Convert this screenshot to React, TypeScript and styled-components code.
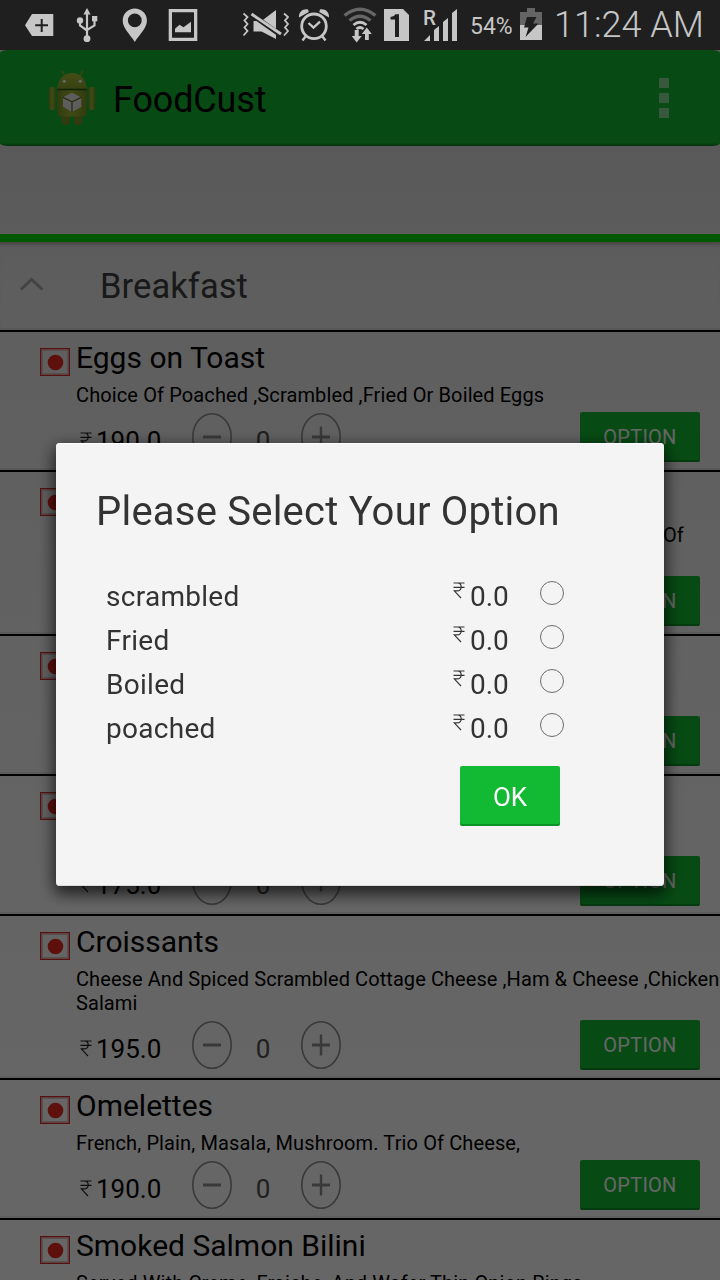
import React from 'react';
import styled, { createGlobalStyle } from 'styled-components';

const GlobalStyle = createGlobalStyle`
  * { box-sizing: border-box; }
  html, body { margin: 0; padding: 0; }
  body {
    width: 720px;
    height: 1280px;
    overflow: hidden;
    font-family: Roboto, 'Liberation Sans', sans-serif;
    background: #dedede;
  }
`;

const Screen = styled.div`
  display: flex;
  flex-direction: column;
  width: 720px;
  height: 1280px;
  overflow: hidden;
  background: linear-gradient(#dcdcdc 50px, #dfdfdf 150px, #ededed 330px, #f0f0f0 480px, #fafafa 850px, #ffffff 1150px);
`;

const StatusBar = styled.header`
  display: flex;
  flex: none;
  height: 50px;
  background: #1f1f1f;
  color: #c6c6c6;
`;

const StatusGlyph = styled.svg<{ $gap: number }>`
  flex: none;
  display: block;
  height: 50px;
  margin-left: ${(p) => p.$gap}px;
  fill: #c6c6c6;
`;

const BatteryLevel = styled.span`
  flex: none;
  width: 51px;
  margin-left: 11px;
  padding-top: 2px;
  font-size: 23px;
  line-height: 50px;
  white-space: nowrap;
`;

const Clock = styled.span`
  flex: none;
  margin-left: 12px;
  font-size: 36px;
  font-weight: 300;
  line-height: 51px;
  white-space: nowrap;
`;

const ActionBar = styled.div`
  display: flex;
  align-items: center;
  flex: none;
  height: 96px;
  padding: 0 51px 0 48px;
  border-radius: 8px / 3px;
  background: linear-gradient(#12b832 93px, #0c8a24 95px, #0a7a20 96px);
`;

const AppName = styled.h1`
  flex: 1;
  margin: 3px 0 0 17px;
  font-size: 36px;
  font-weight: 400;
  line-height: 42px;
  letter-spacing: -0.15px;
  color: #000;
`;

const OverflowMenu = styled.div`
  display: flex;
  flex-direction: column;
  gap: 5px;
`;

const OverflowDot = styled.i`
  width: 10px;
  height: 10px;
  background: #8cdc9b;
`;

const TabStrip = styled.div`
  flex: none;
  height: 96px;
  border-bottom: 8px solid #00de00;
`;

const SectionHeader = styled.div`
  display: flex;
  align-items: center;
  flex: none;
  height: 90px;
  padding-left: 20px;
  border-bottom: 2px solid #000;
  box-shadow: inset 0 5px 4px -3px rgba(0, 0, 0, 0.28), inset 0 -2px 0 rgba(0, 0, 0, 0.07);
`;

const Chevron = styled.svg`
  display: block;
  margin-top: -4px;
  fill: none;
  stroke: #a8a8a8;
  stroke-width: 3;
`;

const SectionTitle = styled.h2`
  margin: 0 0 1px 56px;
  font-size: 34.5px;
  font-weight: 400;
  line-height: 42px;
  letter-spacing: 0.08px;
  color: #404040;
`;

const MenuRow = styled.article`
  display: flex;
  flex: none;
  align-items: flex-start;
  padding: 8px 0 8px 40px;
  border-bottom: 2px solid #000;
  box-shadow: inset 0 -2px 0 rgba(0, 0, 0, 0.07);
`;

const FoodMark = styled.svg`
  flex: none;
  display: block;
  margin: 8px 6px 0 0;
`;

const ItemBody = styled.div`
  flex: 1;
  min-width: 0;
`;

const ItemName = styled.h3`
  height: 36px;
  margin: 0 0 7px;
  font-size: 30px;
  font-weight: 400;
  line-height: 36px;
  color: #000;
  white-space: nowrap;
`;

const Description = styled.p<{ $lines: number; $indent: number }>`
  height: ${(p) => p.$lines * 24}px;
  margin: 0 0 5px;
  padding-left: ${(p) => p.$indent}px;
  font-size: 20px;
  line-height: 24px;
  letter-spacing: ${(p) => (p.$lines > 1 ? 0.08 : 0.12)}px;
  color: #000;
  white-space: pre;
`;

const Controls = styled.div`
  display: flex;
  align-items: center;
  height: 50px;
  padding: 0 20px 0 4px;
`;

const Price = styled.span`
  flex: none;
  width: 100px;
  padding: 8px 0 0 4px;
  font-size: 26px;
  line-height: 42px;
  color: #000;
`;

const Quantity = styled.span`
  flex: none;
  width: 69px;
  padding-top: 8px;
  font-size: 26px;
  line-height: 42px;
  text-align: center;
  padding-right: 7px;
  color: #505050;
`;

const Stepper = styled.svg`
  flex: none;
  display: block;
  fill: none;
  stroke: #8e8e8e;
`;

const Button = styled.button<{ $large?: boolean }>`
  display: block;
  width: ${(p) => (p.$large ? 100 : 120)}px;
  height: ${(p) => (p.$large ? 60 : 50)}px;
  margin: 0 0 0 auto;
  padding: ${(p) => (p.$large ? 2 : 0)}px 0 0;
  border: 0;
  border-radius: 2px;
  background: #12b932;
  box-shadow: inset 0 -2px 0 rgba(0, 60, 10, 0.3);
  font-family: inherit;
  font-size: ${(p) => (p.$large ? 26 : 20)}px;
  letter-spacing: ${(p) => (p.$large ? 0 : 0.25)}px;
  color: #fff;
`;

const Scrim = styled.div`
  position: fixed;
  left: 0;
  top: 50px;
  width: 720px;
  height: 1230px;
  display: flex;
  justify-content: center;
  align-items: flex-start;
  padding-top: 393px;
  background: rgba(0, 0, 0, 0.6);
`;

const Dialog = styled.section`
  display: flex;
  flex-direction: column;
  width: 608px;
  height: 443px;
  padding: 45px 104px 60px 40px;
  border-radius: 4px;
  background: #f4f4f4;
  box-shadow: 0 6px 16px 2px rgba(0, 0, 0, 0.7), inset 0 1px 0 #fff, inset 0 -1px 0 #dcdcdc;
`;

const DialogTitle = styled.h2`
  margin: 0 0 39px;
  font-size: 40px;
  font-weight: 400;
  line-height: 48px;
  letter-spacing: 0.22px;
  color: #333;
  white-space: nowrap;
`;

const OptionRow = styled.label`
  display: flex;
  align-items: center;
  height: 44px;
  padding-left: 10px;
  font-size: 28px;
  line-height: 44px;
  color: #333;
`;

const OptionName = styled.span`
  flex: none;
  width: 347px;
  letter-spacing: 0.28px;
`;

const OptionPrice = styled.span`
  flex: none;
  width: 77px;
  padding-left: 5px;
  white-space: nowrap;
`;

const Radio = styled.i`
  flex: none;
  width: 24px;
  height: 24px;
  margin: -8px 0 0 -2px;
  border: 1.5px solid #6c6c6c;
  border-radius: 50%;
`;

const OkSlot = styled.div`
  margin-top: 15px;
`;

const RupeeSvg = styled.svg<{ $raised?: boolean }>`
  flex: none;
  display: block;
  margin-top: ${(p) => (p.$raised ? -14 : 6)}px;
  fill: none;
  stroke: ${(p) => (p.$raised ? '#333' : '#222')};
  stroke-width: 1.15;
`;

const Rupee = ({ raised }: { raised?: boolean }) => (
  <RupeeSvg $raised={raised} width="12" height="17" viewBox="0 0 12 17">
    <path d="M0.5 1h11M0.5 5.3h11M1 1h3.5c5 0 5 7.8-.5 7.8H1.2L8 16" />
  </RupeeSvg>
);

const Android = () => (
  <svg width="48" height="56" viewBox="48 70 48 56">
    <defs>
      <linearGradient id="droidBody" x1="0" x2="1" y1="0" y2="0">
        <stop offset="0" stopColor="#7d9426" />
        <stop offset=".45" stopColor="#a3b834" />
        <stop offset="1" stopColor="#7c9325" />
      </linearGradient>
      <linearGradient id="droidHead" x1="0" x2="0" y1="0" y2="1">
        <stop offset="0" stopColor="#aabf3b" />
        <stop offset="1" stopColor="#8ea42d" />
      </linearGradient>
    </defs>
    <path d="M62 70.800l4.500 7M83 70.800l-4.500 7" stroke="#9ab030" strokeWidth="1.500" />
    <rect x="49" y="87" width="6.5" height="23" rx="2.500" fill="url(#droidBody)" />
    <rect x="88.5" y="87" width="6.500" height="23" rx="2.500" fill="url(#droidBody)" />
    <path d="M61.5 113h8v9q0 3-4 3t-4-3zM74 113h8v9q0 3-4 3t-4-3z" fill="#7c9326" />
    <path d="M57.3 88.800c1-21 28.500-21 29.500 0z" fill="url(#droidHead)" />
    <path d="M57.3 90.200h29.500V112q0 4.500-5 4.500H62.300q-5 0-5-4.500z" fill="url(#droidBody)" />
    <path d="M57.300 89.500h29.500" stroke="#3e4a12" strokeWidth="1.400" />
    <circle cx="64.300" cy="81.300" r="1.600" fill="#fff" />
    <circle cx="80.300" cy="81.300" r="1.600" fill="#fff" />
    <path d="M72 92.800l9.300 4.700v9.600L72 112l-9-5.200v-9.600z" fill="#e8e8e8" />
    <path d="M63 97.300l9 4.500 9.300-4.500M72 101.800V112" fill="none" stroke="#66751f" strokeWidth="1.300" />
  </svg>
);

const StatusIcons = () => (
  <>
    <StatusGlyph $gap={25} width="29" viewBox="25 0 29 50">
      <path fillRule="evenodd" d="M25 25.300L32 14h21.300v22H32zM40.700 19v5.300h-5.500v2h5.500V32h2v-5.700H48v-2h-5.300V19z" />
    </StatusGlyph>
    <StatusGlyph $gap={22} width="22" viewBox="76 0 22 50">
      <path d="M87 8l3.600 6.500h-7.200z" />
      <circle cx="80" cy="20.500" r="3.200" />
      <rect x="92" y="16" width="5.300" height="5.300" />
      <circle cx="87" cy="38.700" r="3.400" />
      <path d="M87 13v25M80 21v4.500l7 5M94.500 20v5.500L87 30" fill="none" stroke="#c6c6c6" strokeWidth="2.200" />
    </StatusGlyph>
    <StatusGlyph $gap={24} width="26" viewBox="122 0 26 50">
      <path fillRule="evenodd" d="M134.800 42C130 34 122.700 28.500 122.700 20.500a12.100 12 0 0 1 24.200 0C146.900 28.500 139.600 34 134.800 42zM134.800 13.500a6.900 6.900 0 1 0 0 13.800a6.900 6.900 0 1 0 0-13.800z" />
    </StatusGlyph>
    <StatusGlyph $gap={20} width="30" viewBox="168 0 30 50">
      <path fillRule="evenodd" d="M168.700 9h28.600v32h-28.600zM172 12.300v25.400h22V12.300z" />
      <path d="M175 32.300v-3.600l4.500-4 4 2.600 7.500-5.500v10.500z" />
    </StatusGlyph>
    <StatusGlyph $gap={45} width="47" viewBox="243 0 47 50">
      <path d="M253.500 21h8l14.500-11v29l-14.500-7.500h-8z" />
      <path d="M253 15.500l29 20.500" stroke="#1f1f1f" strokeWidth="5" />
      <path d="M251.500 14l29.500 20" stroke="#c6c6c6" strokeWidth="3" />
      <path d="M243.500 13.500l4 3.500-3 3.500 3 3.500-3 3.500 3 3.500-4 4.500M284 13.500l4 3.500-3 3.500 3 3.500-3 3.500 3 3.500-4 4.500" fill="none" stroke="#c6c6c6" strokeWidth="1.800" />
    </StatusGlyph>
    <StatusGlyph $gap={8} width="32" viewBox="298 0 32 50">
      <circle cx="314" cy="26.300" r="12.300" fill="none" stroke="#c6c6c6" strokeWidth="2.800" />
      <path d="M308.500 23l5 4.700 6.500-6M305.500 36.500l-3 4M322.500 36.500l3 4" fill="none" stroke="#c6c6c6" strokeWidth="2.400" />
      <path d="M299 17.500c-.5-5.500 4-9 9-8l.8 2.500zM329 17.500c.5-5.500-4-9-9-8l-.8 2.500z" />
    </StatusGlyph>
    <StatusGlyph $gap={13} width="35" viewBox="343 0 35 50">
      <path d="M344.500 15.500q15.500-12.500 31 0M349.500 20.500q10.500-8.500 21 0" fill="none" stroke="#666" strokeWidth="3.300" />
      <path d="M353.500 25q6.500-5.500 13 0M356.500 29q3.500-3 7 0" fill="none" stroke="#c6c6c6" strokeWidth="2.800" />
      <path d="M354.700 30h4v6h3l-5 6.500-5-6.500h3zM365 40v-6h-3.200l5-6.500 5 6.500h-3V40z" />
    </StatusGlyph>
    <StatusGlyph $gap={6} width="26" viewBox="384 0 26 50">
      <path d="M384 9h19l6 6v26h-25z" />
      <path d="M390.500 19.500v-2.500c3-.3 4-1.200 4.800-2.700h3.700V37H395V19.500z" fill="#1f1f1f" />
    </StatusGlyph>
    <StatusGlyph $gap={13} width="36" viewBox="423 0 36 50">
      <text x="423" y="25" fontFamily="Roboto, sans-serif" fontSize="21" fontWeight="500" textLength="13" lengthAdjust="spacingAndGlyphs">R</text>
      <path d="M424 41l6-6v6zM434 41V30l5-4v15zM443 41V22l5-4v23zM452 41V13l5-4v32z" />
    </StatusGlyph>
    <BatteryLevel>54%</BatteryLevel>
    <StatusGlyph $gap={-1} width="22" viewBox="520 0 22 50">
      <path d="M527 8h8v4h7v13h-22V12h7z" fill="#646464" />
      <path d="M520 25h22v15h-22z" />
      <path d="M527 17h9.500l-3.500 6.500h5.500L525.500 37l3-9.500h-4.500z" fill="#1f1f1f" />
    </StatusGlyph>
  </>
);

type Item = { name: string; lines: string[]; price: string; indent?: number };

const items: Item[] = [
  { name: 'Eggs on Toast', lines: ['Choice Of Poached ,Scrambled ,Fried Or Boiled Eggs'], price: '190.0' },
  { name: '', lines: ['Of', ''], price: '', indent: 587 },
  { name: '', lines: [''], price: '' },
  { name: '', lines: [''], price: '175.0' },
  { name: 'Croissants', lines: ['Cheese And Spiced Scrambled Cottage Cheese ,Ham & Cheese ,Chicken', 'Salami'], price: '195.0' },
  { name: 'Omelettes', lines: ['French, Plain, Masala, Mushroom. Trio Of Cheese,'], price: '190.0' },
  { name: 'Smoked Salmon Bilini', lines: ['Served With Creme, Fraiche, And Wafer Thin Onion Rings'], price: '' },
];

const options = ['scrambled', 'Fried', 'Boiled', 'poached'];

const MenuItem = ({ item }: { item: Item }) => (
  <MenuRow>
    <FoodMark width="30" height="28" viewBox="0 0 30 28">
      <rect x="2" y="2" width="26" height="24" fill="none" stroke="#dcb4b2" strokeWidth="1.500" />
      <rect x=".6" y=".6" width="28.800" height="26.800" fill="none" stroke="#d82c28" strokeWidth="1.200" />
      <circle cx="15.500" cy="14.500" r="7.800" fill="#e82820" />
    </FoodMark>
    <ItemBody>
      <ItemName>{item.name}</ItemName>
      <Description $lines={item.lines.length} $indent={item.indent ?? 0}>{item.lines.join('\n')}</Description>
      <Controls>
        {item.price && (
          <>
            <Rupee />
            <Price>{item.price}</Price>
            <Stepper width="40" height="48" viewBox="0 0 40 48">
              <ellipse cx="20" cy="24" rx="19.200" ry="23.200" strokeWidth="1.600" />
              <path d="M11 24h18" strokeWidth="3" />
            </Stepper>
            <Quantity>0</Quantity>
            <Stepper width="40" height="48" viewBox="0 0 40 48">
              <ellipse cx="20" cy="24" rx="19.200" ry="23.200" strokeWidth="1.600" />
              <path d="M11 24h18" strokeWidth="3" />
              <path d="M20 13.500v21" strokeWidth="2.400" />
            </Stepper>
          </>
        )}
        <Button>OPTION</Button>
      </Controls>
    </ItemBody>
  </MenuRow>
);

export default function App() {
  return (
    <>
      <GlobalStyle />
      <Screen>
        <StatusBar>
          <StatusIcons />
          <Clock>11:24 AM</Clock>
        </StatusBar>
        <ActionBar>
          <Android />
          <AppName>FoodCust</AppName>
          <OverflowMenu>
            <OverflowDot />
            <OverflowDot />
            <OverflowDot />
          </OverflowMenu>
        </ActionBar>
        <TabStrip />
        <SectionHeader>
          <Chevron width="24" height="14" viewBox="0 0 24 14">
            <path d="M1 12.500L11.500 2.500 22.500 12.500" />
          </Chevron>
          <SectionTitle>Breakfast</SectionTitle>
        </SectionHeader>
        {items.map((item, i) => (
          <MenuItem key={i} item={item} />
        ))}
      </Screen>
      <Scrim>
        <Dialog>
          <DialogTitle>Please Select Your Option</DialogTitle>
          {options.map((name) => (
            <OptionRow key={name}>
              <OptionName>{name}</OptionName>
              <Rupee raised />
              <OptionPrice>0.0</OptionPrice>
              <Radio />
            </OptionRow>
          ))}
          <OkSlot>
            <Button $large>OK</Button>
          </OkSlot>
        </Dialog>
      </Scrim>
    </>
  );
}
